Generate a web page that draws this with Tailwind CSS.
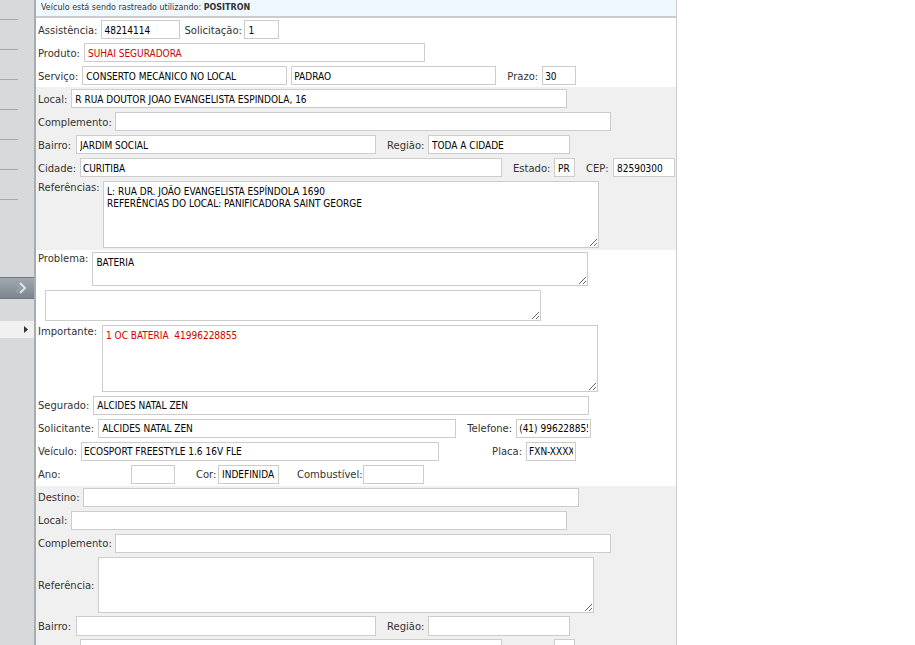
<!DOCTYPE html>
<html lang="pt-BR">
<head>
    <meta charset="UTF-8">
    <meta name="viewport" content="width=device-width, initial-scale=1.0">
    <title>Assistência</title>
    <script src="https://cdn.jsdelivr.net/npm/@tailwindcss/browser@4"></script>
</head>
<body class="bg-white h-screen overflow-hidden flex font-['DejaVu_Sans',Verdana,sans-serif] text-[10px] leading-4 text-[#333]">

    <!-- Menu lateral -->
    <aside class="w-[34px] shrink-0 bg-[#d6dadd]">
        <div class="w-[18px] pt-[19px] h-[277px] flex flex-col gap-[29px]">
            <hr class="border-[#a3a8ab]">
            <hr class="border-[#a3a8ab]">
            <hr class="border-[#a3a8ab]">
            <hr class="border-[#a3a8ab]">
            <hr class="border-[#a3a8ab]">
            <hr class="border-[#a3a8ab]">
            <hr class="border-[#a3a8ab]">
        </div>
        <button type="button" aria-label="Expandir" class="w-full h-[22px] pr-[7px] flex items-center justify-end border-y border-[#6f767d] bg-linear-to-b from-[#a0a8b0] to-[#7c858d]">
            <svg class="w-3 h-3" viewBox="0 0 12 12" fill="none" stroke-width="2">
                <path d="M1 2l4 4-4 4" stroke="#98a0a8"/>
                <path d="M5 1l5 5-5 5" stroke="#dfe3e6"/>
            </svg>
        </button>
        <button type="button" aria-label="Abrir menu" class="w-full h-[17px] mt-[22px] pr-[6px] flex items-center justify-end bg-[#f0f0f0]">
            <svg class="w-1 h-[7px]" viewBox="0 0 4 7"><path d="M0 0l4 3.5L0 7z" fill="#333"/></svg>
        </button>
    </aside>

    <!-- Dados da assistência -->
    <form class="flex-1 max-w-[643px] h-full overflow-hidden border-l-2 border-l-[#a9adb0] border-r border-r-[#ccc]">
        <header class="h-[18px] pl-[5px] border-b-2 border-[#ccc] bg-[#eff7ff] text-[8px] leading-4">
            Veículo está sendo rastreado utilizando: <b>POSITRON</b>
        </header>

        <section class="pl-[2px] font-['DejaVu_Sans_Condensed','DejaVu_Sans',Tahoma,sans-serif] text-black">
            <div class="h-[23px] flex items-center gap-1">
                <label for="assistencia" class="pt-[2px] font-['DejaVu_Sans'] text-[#333]">Assistência:</label>
                <input id="assistencia" value="48214114" class="w-[79px] h-[19px] pt-px px-[2px] border border-[#ccc] bg-white">
                <label for="solicitacao" class="w-14 whitespace-nowrap pt-[2px] font-['DejaVu_Sans'] text-[#333]">Solicitação:</label>
                <input id="solicitacao" value="1" class="w-[35px] h-[19px] pt-px px-[3px] border border-[#ccc] bg-white">
            </div>
            <div class="h-[23px] flex items-center gap-1">
                <label for="produto" class="pt-[2px] font-['DejaVu_Sans'] text-[#333]">Produto:</label>
                <input id="produto" value="SUHAI SEGURADORA" class="w-[341px] h-[19px] pt-px px-[3px] border border-[#ccc] bg-white text-[#d00000]">
            </div>
            <div class="h-[23px] flex items-center gap-1">
                <label for="servico" class="pt-[2px] font-['DejaVu_Sans'] text-[#333]">Serviço:</label>
                <input id="servico" value="CONSERTO MECÂNICO NO LOCAL" class="w-[205px] h-[19px] pt-px px-[3px] border border-[#ccc] bg-white">
                <input aria-label="Tipo" value="PADRÃO" class="w-[205px] h-[19px] pt-px px-[2px] border border-[#ccc] bg-white">
                <label for="prazo" class="ml-[7px] pt-[2px] font-['DejaVu_Sans'] text-[#333]">Prazo:</label>
                <input id="prazo" value="30" class="w-[34px] h-[19px] pt-px px-[2px] border border-[#ccc] bg-white">
            </div>
        </section>

        <section class="pl-[2px] bg-[#f0f0f0] font-['DejaVu_Sans_Condensed','DejaVu_Sans',Tahoma,sans-serif] text-black">
            <div class="h-[23px] flex items-center gap-1">
                <label for="local" class="pt-[2px] font-['DejaVu_Sans'] text-[#333]">Local:</label>
                <input id="local" value="R RUA DOUTOR JOAO EVANGELISTA ESPINDOLA, 16" class="w-[496px] h-[19px] pt-px px-[3px] border border-[#ccc] bg-white">
            </div>
            <div class="h-[23px] flex items-center gap-1">
                <label for="complemento" class="w-[73px] whitespace-nowrap pt-[2px] font-['DejaVu_Sans'] text-[#333]">Complemento:</label>
                <input id="complemento" class="w-[496px] h-[19px] pt-px px-[3px] border border-[#ccc] bg-white">
            </div>
            <div class="h-[23px] flex items-center gap-1">
                <label for="bairro" class="w-[34px] pt-[2px] font-['DejaVu_Sans'] text-[#333]">Bairro:</label>
                <input id="bairro" value="JARDIM SOCIAL" class="w-[300px] h-[19px] pt-px px-[3px] border border-[#ccc] bg-white">
                <label for="regiao" class="ml-[7px] w-[37px] whitespace-nowrap pt-[2px] font-['DejaVu_Sans'] text-[#333]">Região:</label>
                <input id="regiao" value="TODA A CIDADE" class="w-[142px] h-[19px] pt-px px-[3px] border border-[#ccc] bg-white">
            </div>
            <div class="h-[23px] flex items-center gap-1">
                <label for="cidade" class="w-[38px] whitespace-nowrap pt-[2px] font-['DejaVu_Sans'] text-[#333]">Cidade:</label>
                <input id="cidade" value="CURITIBA" class="w-[422px] h-[19px] pt-px px-[2px] border border-[#ccc] bg-white">
                <label for="estado" class="ml-[7px] w-[37px] whitespace-nowrap pt-[2px] font-['DejaVu_Sans'] text-[#333]">Estado:</label>
                <input id="estado" value="PR" class="w-[21px] h-[19px] pt-px px-[3px] border border-[#ccc] bg-white">
                <label for="cep" class="ml-[7px] w-[23px] whitespace-nowrap pt-[2px] font-['DejaVu_Sans'] text-[#333]">CEP:</label>
                <input id="cep" value="82590300" class="w-[62px] h-[19px] pt-px px-[3px] border border-[#ccc] bg-white">
            </div>
            <div class="py-[2px] flex items-start gap-1 leading-3">
                <label for="referencias" class="w-[61px] whitespace-nowrap pt-px font-['DejaVu_Sans'] text-[#333]">Referências:</label>
                <textarea id="referencias" class="w-[496px] h-[67px] px-[3px] py-1 border border-[#ccc] bg-white resize">L: RUA DR. JOÃO EVANGELISTA ESPÍNDOLA 1690
REFERÊNCIAS DO LOCAL: PANIFICADORA SAINT GEORGE</textarea>
            </div>
        </section>

        <section class="pl-[2px] font-['DejaVu_Sans_Condensed','DejaVu_Sans',Tahoma,sans-serif] text-black">
            <div class="py-[2px] flex items-start gap-1 leading-3">
                <label for="problema" class="pt-px font-['DejaVu_Sans'] text-[#333]">Problema:</label>
                <textarea id="problema" class="w-[496px] h-[34px] px-[3px] py-1 border border-[#ccc] bg-white resize">BATERIA</textarea>
            </div>
            <div class="py-[2px] pl-[7px] flex leading-3">
                <textarea aria-label="Observações" class="w-[496px] h-[31px] px-[3px] py-1 border border-[#ccc] bg-white resize"></textarea>
            </div>
            <div class="py-[2px] flex items-start gap-1 leading-3">
                <label for="importante" class="w-[60px] pt-px font-['DejaVu_Sans'] text-[#333]">Importante:</label>
                <textarea id="importante" class="w-[496px] h-[67px] px-[3px] py-1 border border-[#ccc] bg-white text-[#d00000] resize">1 OC BATERIA  41996228855</textarea>
            </div>
            <div class="h-[23px] flex items-center gap-1">
                <label for="segurado" class="pt-px font-['DejaVu_Sans'] text-[#333]">Segurado:</label>
                <input id="segurado" value="ALCIDES NATAL ZEN" class="w-[496px] h-[19px] px-[3px] border border-[#ccc] bg-white">
            </div>
            <div class="h-[23px] flex items-center gap-1">
                <label for="solicitante" class="pt-px font-['DejaVu_Sans'] text-[#333]">Solicitante:</label>
                <input id="solicitante" value="ALCIDES NATAL ZEN" class="w-[358px] h-[19px] px-[3px] border border-[#ccc] bg-white">
                <label for="telefone" class="ml-[7px] pt-px font-['DejaVu_Sans'] text-[#333]">Telefone:</label>
                <input id="telefone" value="(41) 996228855" class="w-[75px] h-[19px] px-[2px] border border-[#ccc] bg-white">
            </div>
            <div class="h-[23px] flex items-center gap-1">
                <label for="veiculo" class="pt-px font-['DejaVu_Sans'] text-[#333]">Veículo:</label>
                <input id="veiculo" value="ECOSPORT FREESTYLE 1.6 16V FLE" class="w-[358px] h-[19px] px-[2px] border border-[#ccc] bg-white">
                <label for="placa" class="ml-[49px] pt-px font-['DejaVu_Sans'] text-[#333]">Placa:</label>
                <input id="placa" value="FXN-XXXX" class="w-[50px] h-[19px] px-[2px] border border-[#ccc] bg-white">
            </div>
            <div class="h-[23px] flex items-center">
                <label for="ano" class="w-[93px] pt-px font-['DejaVu_Sans'] text-[#333]">Ano:</label>
                <input id="ano" class="w-11 h-[19px] px-[3px] border border-[#ccc] bg-white">
                <label for="cor" class="ml-[21px] w-[22px] pt-px font-['DejaVu_Sans'] text-[#333]">Cor:</label>
                <input id="cor" value="INDEFINIDA" class="w-[61px] h-[19px] px-[3px] border border-[#ccc] bg-white">
                <label for="combustivel" class="ml-[18px] w-[66px] whitespace-nowrap pt-px font-['DejaVu_Sans'] text-[#333]">Combustível:</label>
                <input id="combustivel" class="w-[61px] h-[19px] px-[3px] border border-[#ccc] bg-white">
            </div>
        </section>

        <section class="pl-[2px] bg-[#f0f0f0] font-['DejaVu_Sans_Condensed','DejaVu_Sans',Tahoma,sans-serif] text-black">
            <div class="h-[23px] flex items-center gap-1">
                <label for="destino" class="w-[41px] whitespace-nowrap pt-px font-['DejaVu_Sans'] text-[#333]">Destino:</label>
                <input id="destino" class="w-[496px] h-[19px] px-[3px] border border-[#ccc] bg-white">
            </div>
            <div class="h-[23px] flex items-center gap-1">
                <label for="destino-local" class="pt-px font-['DejaVu_Sans'] text-[#333]">Local:</label>
                <input id="destino-local" class="w-[496px] h-[19px] px-[3px] border border-[#ccc] bg-white">
            </div>
            <div class="h-[23px] flex items-center gap-1">
                <label for="destino-complemento" class="w-[73px] whitespace-nowrap pt-px font-['DejaVu_Sans'] text-[#333]">Complemento:</label>
                <input id="destino-complemento" class="w-[496px] h-[19px] px-[3px] border border-[#ccc] bg-white">
            </div>
            <div class="pt-[2px] pb-px flex items-center gap-1">
                <label for="destino-referencia" class="pt-[2px] font-['DejaVu_Sans'] text-[#333]">Referência:</label>
                <textarea id="destino-referencia" class="w-[496px] h-14 px-[3px] py-1 border border-[#ccc] bg-white resize"></textarea>
            </div>
            <div class="h-[23px] flex items-center gap-1">
                <label for="destino-bairro" class="w-[34px] pt-[2px] font-['DejaVu_Sans'] text-[#333]">Bairro:</label>
                <input id="destino-bairro" class="w-[300px] h-5 px-[3px] border border-[#ccc] bg-white">
                <label for="destino-regiao" class="ml-[7px] w-[37px] whitespace-nowrap pt-[2px] font-['DejaVu_Sans'] text-[#333]">Região:</label>
                <input id="destino-regiao" class="w-[142px] h-5 px-[3px] border border-[#ccc] bg-white">
            </div>
            <div class="h-[23px] flex items-center">
                <input aria-label="Cidade de destino" class="ml-[42px] w-[422px] h-[19px] px-[3px] border border-[#ccc] bg-white">
                <input aria-label="Estado de destino" class="ml-[52px] w-[21px] h-[19px] px-[3px] border border-[#ccc] bg-white">
            </div>
        </section>
    </form>

</body>
</html>
